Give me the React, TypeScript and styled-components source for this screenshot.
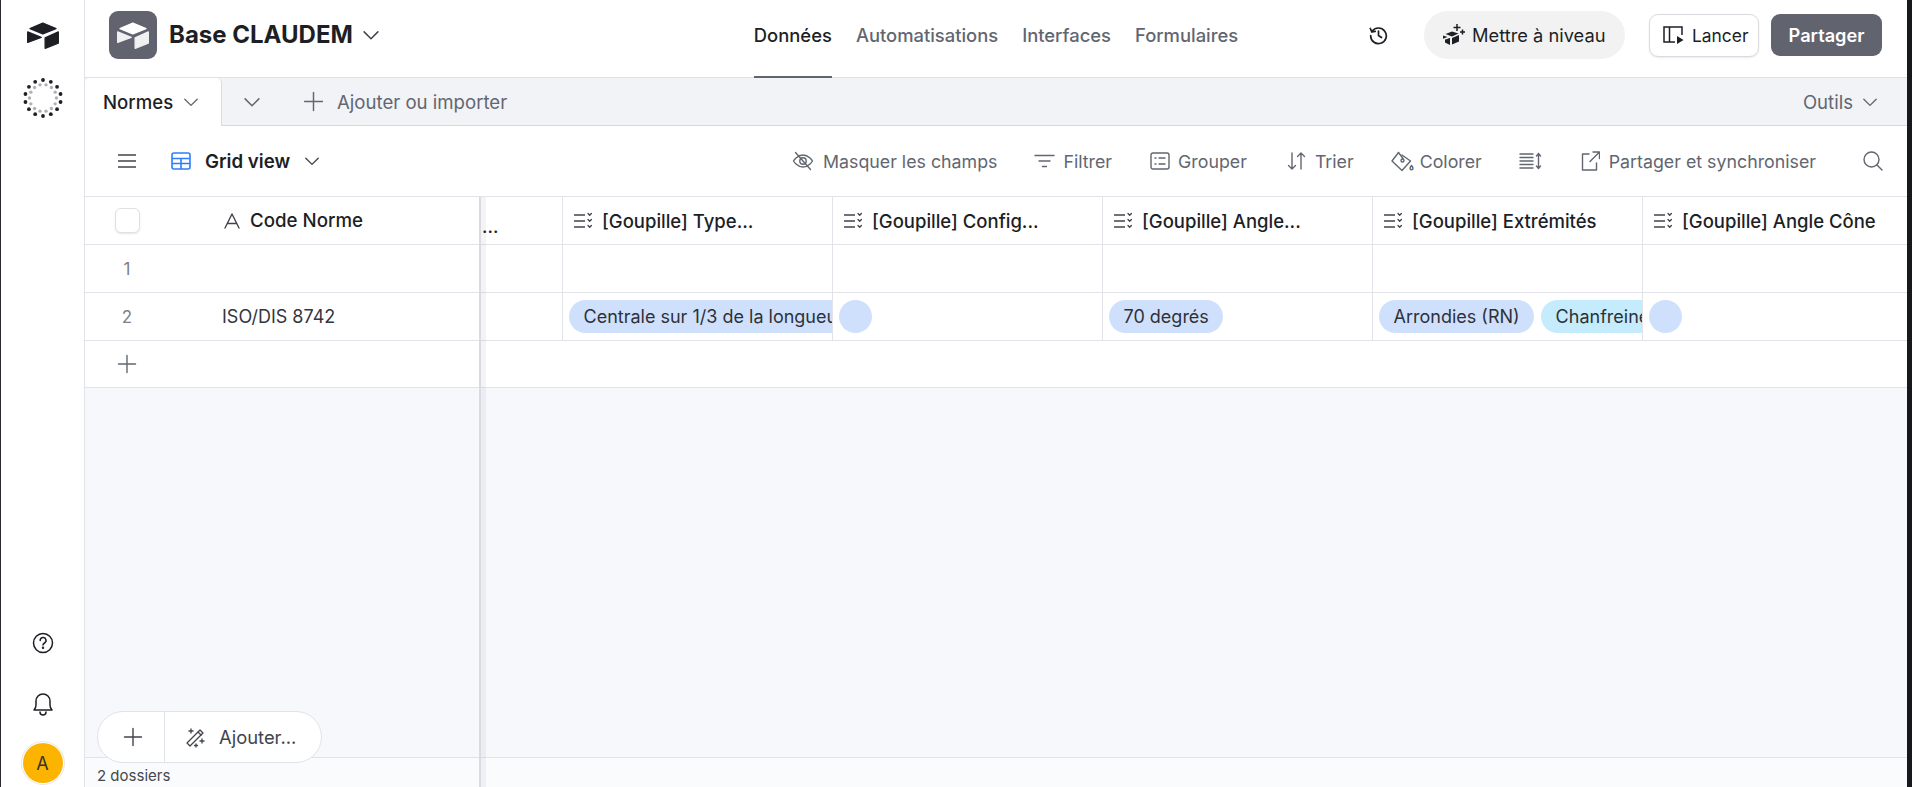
import React from "react";
import styled, { createGlobalStyle } from "styled-components";

const Global = createGlobalStyle`
  html, body { margin: 0; padding: 0; height: 100%; overflow: hidden; background: #101114; }
  #root { height: 100%; }
  * { box-sizing: border-box; }
  body { font-family: Inter, "Noto Sans", sans-serif; color: #1d1f25; }
`;

const Frame = styled.div`
  width: 1912px; height: 787px; display: flex;
  border-left: 1px solid #2a2b30; border-right: 5px solid #17181b; background: #fff;
`;
const Rail = styled.aside`
  width: 84px; flex: none; border-right: 1px solid #e1e3e8; display: flex; flex-direction: column; align-items: center; background: #fff;
  padding: 22px 0 4px 0;
`;
const RailSpacer = styled.div`flex: 1;`;
const RailIcon = styled.div<{ $mt?: number }>`
  display: flex; margin-top: ${p => p.$mt ?? 0}px; margin-left: 1px;
`;
const Avatar = styled.div`
  width: 40px; height: 40px; border-radius: 50%; background: #fcb400; box-shadow: 0 0 0 1px #fff, 0 0 0 2px #e8e8e8;
  margin-top: 27px; display: flex; align-items: center; justify-content: center; font-size: 18px; color: #333;
`;
const Main = styled.main`flex: 1; min-width: 0; display: flex; flex-direction: column; position: relative;`;

const Header = styled.header`
  height: 78px; flex: none; display: flex; align-items: center; border-bottom: 1px solid #dfe1e6; padding: 0 25px 7px 24px;
`;
const BaseTile = styled.div`
  width: 48px; height: 48px; border-radius: 9px; background: #61646f; display: flex; align-items: center; justify-content: center; flex: none;
`;
const BaseName = styled.div`font-size: 24px; font-weight: 700; margin-left: 12px; padding-bottom: 2px; color: #1d1f25; white-space: nowrap;`;
const Chevron = styled.svg<{ $ml?: number }>`flex: none; display: block; margin-left: ${p => p.$ml ?? 0}px;`;
const Nav = styled.nav`
  display: flex; gap: 24px; margin-left: 373px; align-self: flex-start;
`;
const NavItem = styled.a<{ $on?: boolean }>`
  font-size: 18.4px; font-weight: 500; color: ${p => p.$on ? "#1d1f25" : "#616670"}; height: 78px; display: flex; align-items: center;
  padding-bottom: 6px; border-bottom: 2px solid ${p => p.$on ? "#61646f" : "transparent"}; white-space: nowrap;
`;
const HeaderRight = styled.div`margin-left: auto; display: flex; align-items: center;`;
const HistoryBtn = styled.div`display: flex; margin-right: 36px;`;
const UpgradePill = styled.div`
  width: 201px; height: 48px; border-radius: 24px; background: #f2f2f3; display: flex; align-items: center; padding-left: 18px; gap: 6px; font-size: 18.3px; margin-right: 24px;
`;
const LaunchBtn = styled.div`
  width: 110px; height: 43px; border-radius: 9px; background: #fff; border: 1px solid #d9dbe0; box-shadow: 0 1px 2px rgba(0,0,0,.08); display: flex; align-items: center; padding-left: 13px; gap: 8px; font-size: 17.4px; margin-right: 12px;
`;
const ShareBtn = styled.div`
  width: 111px; height: 42px; border-radius: 9px; background: #61646f; color: #fff; display: flex; align-items: center; justify-content: center; font-size: 18.2px; font-weight: 600;
`;

const TabBar = styled.div`
  height: 48px; flex: none; background: #f1f3f7; display: flex; align-items: center; border-bottom: 1px solid #d6d8de; padding-right: 28px; color: #616670; font-size: 18.6px;
`;
const ActiveTab = styled.div`
  width: 137px; height: 48px; background: #fff; border-radius: 5px 5px 0 0; border-right: 1px solid #dadce2;
  display: flex; align-items: center; padding-left: 18px; color: #1d1f25; font-weight: 500; gap: 9px; align-self: flex-start; position: relative; z-index: 1;
`;
const TabMore = styled.div`display: flex; margin-left: 20px;`;
const AddTab = styled.div`display: flex; align-items: center; margin-left: 41px; gap: 13px;`;
const Tools = styled.div`margin-left: auto; display: flex; align-items: center; gap: 8px;`;

const Toolbar = styled.div`
  height: 71px; flex: none; display: flex; align-items: center; border-bottom: 1px solid #e1e3e8; padding: 0 24px 0 33px; color: #616670; font-size: 17.8px; background: #fff;
`;
const ViewName = styled.div`display: flex; align-items: center; font-size: 18.7px; font-weight: 600; color: #1d1f25; margin-left: 35px; gap: 14px;`;
const ToolActions = styled.div`margin-left: auto; display: flex; align-items: center;`;
const ToolAction = styled.div<{ $ml: number; $gap?: number }>`
  display: flex; align-items: center; margin-left: ${p => p.$ml}px; gap: ${p => p.$gap ?? 8}px; white-space: nowrap;
`;

const GridArea = styled.div`flex: 1; min-height: 0; display: flex; background: #f7f8fc;`;
const Frozen = styled.section`
  width: 396px; flex: none; display: flex; flex-direction: column; border-right: 2px solid #d9dbe0;
`;
const Scroll = styled.section`
  flex: 1; min-width: 0; display: flex; flex-direction: column; position: relative; overflow: hidden;
  &::before { content: ""; position: absolute; left: 0; top: 0; bottom: 0; width: 5px; background: rgba(40,45,60,.05); z-index: 2; pointer-events: none; }
`;
const FrozenRow = styled.div<{ $h?: number }>`
  height: ${p => p.$h ?? 48}px; flex: none; display: grid; grid-template-columns: 84px 42px 1fr; background: #fff; border-bottom: 1px solid #e1e3e8; align-items: center;
`;
const ScrollRow = styled.div<{ $h?: number }>`
  height: ${p => p.$h ?? 48}px; flex: none; display: grid; grid-template-columns: 82px repeat(5, 270px); background: #fff; border-bottom: 1px solid #e1e3e8;
`;
const GutterCell = styled.div`display: flex; justify-content: center; align-items: center; font-size: 17px; color: #7c7f88; grid-column: 1;`;
const Checkbox = styled.div`width: 25px; height: 25px; border-radius: 6px; background: #fff; border: 1px solid #dfe1e6; box-shadow: 0 1px 2px rgba(0,0,0,.1);`;
const HeadName = styled.div`grid-column: 3; display: flex; align-items: center; gap: 10px; padding-left: 13px; font-size: 18.7px; font-weight: 500; white-space: nowrap; overflow: hidden;`;
const PrimaryText = styled.div`grid-column: 3; font-size: 18px; padding-left: 11px; color: #33363e;`;
const HeadCell = styled.div`
  display: flex; align-items: center; gap: 9px; padding-left: 10px; font-size: 18.5px; font-weight: 500; white-space: nowrap; overflow: hidden; border-right: 1px solid #e1e3e8; min-width: 0;
`;
const Dots = styled.div`
  padding: 12px 0 0 1px; font-size: 18px; font-weight: 500; display: flex; align-items: center; border-right: 1px solid #e1e3e8;
`;
const Cell = styled.div`
  display: flex; align-items: center; gap: 7px; padding-left: 6px; overflow: hidden; border-right: 1px solid #e1e3e8; min-width: 0; padding-bottom: 1px;
`;
const Chip = styled.span<{ $bg?: string }>`
  height: 33px; border-radius: 16.5px; background: ${p => p.$bg ?? "#cfe0fd"}; padding: 0 14.5px; font-size: 18px; display: inline-flex; align-items: center; white-space: nowrap; flex: none; color: #2e3138; min-width: 33px;
`;
const Fill = styled.div`flex: 1;`;
const FootFrozen = styled.div`
  height: 30px; flex: none; border-top: 1px solid #e1e3e8; background: #fafbfd; font-size: 15px; color: #45484f; padding: 8px 0 0 12px; white-space: nowrap;
`;
const FootScroll = styled.div`height: 30px; flex: none; border-top: 1px solid #e1e3e8; background: #fafbfd;`;

const Floating = styled.div`
  position: absolute; left: 12px; bottom: 24px; width: 225px; height: 52px; background: #fff; border: 1px solid #e1e3e8; border-radius: 26px; display: flex; z-index: 5;
`;
const FloatPlus = styled.div`width: 67px; padding-left: 3px; border-right: 1px solid #e1e3e8; display: flex; align-items: center; justify-content: center;`;
const FloatAdd = styled.div`display: flex; align-items: center; padding-left: 20px; gap: 13px; font-size: 18.4px; color: #41444c;`;

const Chev = ({ size = 18, ml = 0, color = "#41444c" }: { size?: number; ml?: number; color?: string }) => (
  <Chevron $ml={ml} width={size} height={size} viewBox="0 0 16 16" fill="none" stroke={color} strokeWidth="1.2" strokeLinecap="round" strokeLinejoin="round"><path d="M2.500 5.500 8 11l5.500-5.500" /></Chevron>
);
const Plus = ({ size = 20, color = "#616670" }: { size?: number; color?: string }) => (
  <svg width={size} height={size} viewBox="0 0 20 20" stroke={color} strokeWidth="1.4" strokeLinecap="round"><path d="M10 1.500v17M1.500 10h17" /></svg>
);
const CubeLogo = ({ top, side }: { top: string; side: string }) => (
  <svg width={32} height={27} viewBox="0 0 97 82" strokeLinejoin="round" strokeWidth="4">
    <path fill={top} stroke={top} d="M48 3 88 20 48 36 9 20z" />
    <path fill={side} stroke={side} d="M95 30 55 48v32l40-16z" />
    <path fill={side} stroke={side} d="M2 30 43 47 2 62z" />
  </svg>
);
const Spinner = () => {
  const outer = Array.from({ length: 14 }, (_, i) => {
    const a = (i / 14) * Math.PI * 2 - Math.PI / 2;
    return <circle key={i} cx={20 + 18 * Math.cos(a)} cy={20 + 18 * Math.sin(a)} r={1.9} fill="#1f2024" />;
  });
  const inner = Array.from({ length: 14 }, (_, i) => {
    const a = ((i + 0.5) / 14) * Math.PI * 2 - Math.PI / 2;
    return <circle key={i} cx={20 + 13.500 * Math.cos(a)} cy={20 + 13.500 * Math.sin(a)} r={1.7} fill="#b0b1b5" />;
  });
  return <svg width={40} height={40} viewBox="0 0 40 40">{outer}{inner}</svg>;
};
const MultiSelectIcon = () => (
  <svg width={20} height={18} viewBox="0 0 20 18" fill="none" stroke="#41444c" strokeWidth="1.500" style={{ flex: "none" }}><path d="M1 3h11M1 9h11M1 15h11" /><g strokeWidth="1.300" strokeLinecap="round" strokeLinejoin="round"><path d="M15 1.500l1.700 1.800L18.400 1.500" /><path d="M15 7.500l1.700 1.800 1.700-1.800" /><path d="M15 13.500l1.700 1.800 1.700-1.800" /></g></svg>
);
const Ico = styled.svg.attrs({ fill: "none", stroke: "#616670", strokeWidth: 1.4, strokeLinecap: "round", strokeLinejoin: "round" })`flex: none; display: block;`;

const cols = ["[Goupille] Type...", "[Goupille] Config...", "[Goupille] Angle...", "[Goupille] Extrémités", "[Goupille] Angle Cône"];

export default function App() {
  return (
    <>
      <Global />
      <Frame>
        <Rail>
          <RailIcon><CubeLogo top="#1d1f25" side="#1d1f25" /></RailIcon>
          <RailIcon $mt={29}><Spinner /></RailIcon>
          <RailSpacer />
          <RailIcon>
            <svg width={22} height={22} viewBox="0 0 22 22" fill="none" stroke="#1d1f25" strokeWidth="1.500" strokeLinecap="round"><circle cx="11" cy="11" r="9.500" /><path d="M8.200 8.500a2.900 2.900 0 1 1 4.300 2.500c-.9.500-1.500 1-1.500 2" /><circle cx="11" cy="15.800" r=".5" fill="#1d1f25" /></svg>
          </RailIcon>
          <RailIcon $mt={38}>
            <svg width={22} height={24} viewBox="0 0 22 24" fill="none" stroke="#1d1f25" strokeWidth="1.500" strokeLinejoin="round" strokeLinecap="round"><path d="M2 18c1.500-1.500 2-3 2-5V9a7 7 0 0 1 14 0v4c0 2 .5 3.500 2 5z" /><path d="M8 20a3 3 0 0 0 6 0" /></svg>
          </RailIcon>
          <Avatar>A</Avatar>
        </Rail>
        <Main>
          <Header>
            <BaseTile><CubeLogo top="#ffffff" side="#f1f1f2" /></BaseTile>
            <BaseName>Base CLAUDEM</BaseName>
            <Chev size={20} ml={8} />
            <Nav>
              <NavItem $on>Données</NavItem>
              <NavItem>Automatisations</NavItem>
              <NavItem>Interfaces</NavItem>
              <NavItem>Formulaires</NavItem>
            </Nav>
            <HeaderRight>
              <HistoryBtn>
                <svg width={19} height={19} viewBox="0 0 19 19" fill="none" stroke="#1d1f25" strokeWidth="1.700" strokeLinecap="round" strokeLinejoin="round"><path d="M3 5.500A7.800 7.800 0 1 1 1.700 9.500" /><path d="M1.300 2.500 2.800 5.900l3.400-.6" /><path d="M9.500 5v4.500l3 2" /></svg>
              </HistoryBtn>
              <UpgradePill>
                <svg width={24} height={24} viewBox="0 0 24 24" fill="#1d1f25"><path d="M10 8.500 3.500 11l6.500 2.500 6.500-3z" /><path d="M1 12.500 5.500 14 1 15.700zM8 15l-3 1v0l3 1.700zM10 15l7-3v6.500l-7 3z" /><path d="M8 15.500v6.500l-5-2.500v-3z" /><path d="M15 1v7M11.500 4.500h7M20.500 6.500v5M18 9h5" stroke="#1d1f25" strokeWidth="1.500" /></svg>
                Mettre à niveau
              </UpgradePill>
              <LaunchBtn>
                <svg width={21} height={18} viewBox="0 0 21 18" fill="none" stroke="#1d1f25" strokeWidth="1.500"><path d="M12 16H1V1h18v8" /><path d="M6.500 1v15" /><path d="M14 10l6.500 4-6.500 4z" fill="#1d1f25" stroke="none" /></svg>
                Lancer
              </LaunchBtn>
              <ShareBtn>Partager</ShareBtn>
            </HeaderRight>
          </Header>
          <TabBar>
            <ActiveTab>Normes<Chev color="#616670" /></ActiveTab>
            <TabMore><Chev size={20} color="#616670" /></TabMore>
            <AddTab><Plus size={21} />Ajouter ou importer</AddTab>
            <Tools>Outils<Chev color="#616670" /></Tools>
          </TabBar>
          <Toolbar>
            <svg width={18} height={14} viewBox="0 0 18 14" stroke="#41444c" strokeWidth="1.500"><path d="M0 1h18M0 7h18M0 13h18" /></svg>
            <ViewName>
              <svg width={20} height={18} viewBox="0 0 20 18" fill="none" stroke="#2d7ff9" strokeWidth="1.600"><rect x="1" y="1" width="18" height="16" rx="2" /><path d="M1 6.500h18M1 11.500h18M10 6.500V17" /></svg>
              Grid view
              <Chev ml={-1} />
            </ViewName>
            <ToolActions>
              <ToolAction $ml={0} $gap={9}>
                <Ico width={22} height={20} viewBox="0 0 22 20"><path d="M1.500 10S5 4 11 4s9.500 6 9.500 6-3.500 6-9.500 6-9.500-6-9.500-6z" /><circle cx="11" cy="10" r="3.200" /><path d="M3.500 1.500 18.500 18.500" /></Ico>
                Masquer les champs
              </ToolAction>
              <ToolAction $ml={37}>
                <Ico width={21} height={14} viewBox="0 0 21 14"><path d="M1 1.500h19M5 7h11M8.500 12.500h4" /></Ico>
                Filtrer
              </ToolAction>
              <ToolAction $ml={38}>
                <Ico width={20} height={18} viewBox="0 0 20 18"><rect x="1" y="1" width="18" height="16" rx="2" /><path d="M5 6h1M5 12h1M9 6h6M9 12h6" /></Ico>
                Grouper
              </ToolAction>
              <ToolAction $ml={40} $gap={9}>
                <Ico width={19} height={18} viewBox="0 0 19 18"><path d="M5 1v16M1.500 13.500 5 17l3.500-3.500M14 17V1M10.500 4.500 14 1l3.500 3.500" /></Ico>
                Trier
              </ToolAction>
              <ToolAction $ml={37} $gap={6}>
                <Ico width={23} height={21} viewBox="0 0 23 21"><path d="M7.500 1.500 1 10l10 9.500 8.500-9.500L11 4" /><path d="M7.500 1.500 12 7.500" /><circle cx="11.500" cy="9.500" r="1.500" /><path d="M20.500 14.500c-1 1.200-1.500 2-1.500 2.800a1.500 1.500 0 0 0 3 0c0-.8-.5-1.600-1.500-2.800z" /></Ico>
                Colorer
              </ToolAction>
              <ToolAction $ml={37}>
                <Ico width={23} height={18} viewBox="0 0 23 18"><path d="M1 2h13M1 5.500h13M1 9h13M1 12.500h13M1 16h13M19.500 1.500v15M17.500 4l2-2.500 2 2.500M17.500 14l2 2.500 2-2.500" /></Ico>
              </ToolAction>
              <ToolAction $ml={39} $gap={9}>
                <Ico width={19} height={20} viewBox="0 0 19 20"><path d="M8 3H1.500v16h14v-7" /><path d="M9 10.500 18 1.500M12 1h6.500v6.500" /></Ico>
                Partager et synchroniser
              </ToolAction>
              <ToolAction $ml={47}>
                <Ico width={20} height={20} viewBox="0 0 20 20"><circle cx="8.500" cy="8.500" r="7.500" /><path d="m14 14 5 5" /></Ico>
              </ToolAction>
            </ToolActions>
          </Toolbar>
          <GridArea>
            <Frozen>
              <FrozenRow>
                <GutterCell><Checkbox /></GutterCell>
                <HeadName>
                  <svg width={16} height={16} viewBox="0 0 16 16" fill="none" stroke="#41444c" strokeWidth="1.400" strokeLinecap="round" strokeLinejoin="round"><path d="M1 15 8 1l7 14M3.500 10.500h9" /></svg>
                  Code Norme
                </HeadName>
              </FrozenRow>
              <FrozenRow><GutterCell>1</GutterCell></FrozenRow>
              <FrozenRow><GutterCell>2</GutterCell><PrimaryText>ISO/DIS 8742</PrimaryText></FrozenRow>
              <FrozenRow $h={47}><GutterCell><Plus size={20} /></GutterCell></FrozenRow>
              <Fill />
              <FootFrozen>2 dossiers</FootFrozen>
            </Frozen>
            <Scroll>
              <ScrollRow>
                <Dots>...</Dots>
                {cols.map(c => <HeadCell key={c}><MultiSelectIcon />{c}</HeadCell>)}
              </ScrollRow>
              <ScrollRow>
                <Cell /><Cell /><Cell /><Cell /><Cell /><Cell />
              </ScrollRow>
              <ScrollRow>
                <Cell />
                <Cell><Chip>Centrale sur 1/3 de la longueur</Chip></Cell>
                <Cell><Chip /></Cell>
                <Cell><Chip>70 degrés</Chip></Cell>
                <Cell><Chip>Arrondies (RN)</Chip><Chip $bg="#c4ecfd">Chanfreinées</Chip></Cell>
                <Cell><Chip /></Cell>
              </ScrollRow>
              <ScrollRow $h={47} />
              <Fill />
              <FootScroll />
            </Scroll>
          </GridArea>
          <Floating>
            <FloatPlus><Plus size={20} color="#41444c" /></FloatPlus>
            <FloatAdd>
              <svg width={21} height={21} viewBox="0 0 21 21" fill="none" stroke="#41444c" strokeWidth="1.300" strokeLinecap="round" strokeLinejoin="round"><path d="M2 16 15 3l3 3L5 19z" /><path d="M13 5l3 3" /><path d="M6 2v4M4 4h4M17 12v4M15 14h4M11 17v3M9.500 18.500h3" /></svg>
              Ajouter...
            </FloatAdd>
          </Floating>
        </Main>
      </Frame>
    </>
  );
}
